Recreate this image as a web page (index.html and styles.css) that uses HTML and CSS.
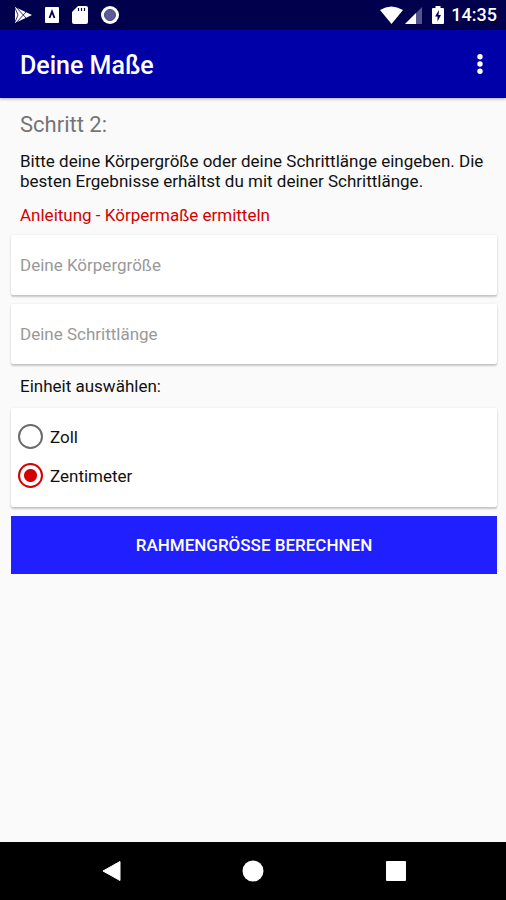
FILE: index.html
```html
<!DOCTYPE html>
<html lang="de">
<head>
<meta charset="utf-8">
<meta name="viewport" content="width=device-width, initial-scale=1">
<title>Deine Maße</title>
<link rel="stylesheet" href="styles.css">
</head>
<body>
<div class="status">
  <div class="status-group notices">
    <svg width="18" height="18" viewBox="0 0 18 18"><path d="M1 1 18 9 1 17Z" fill="#fff"/><path d="M2 1 12 12M2 17 12 6M1 2 4 9 1 16" stroke="#00004d" stroke-width=".8" fill="none"/></svg>
    <svg width="14" height="16" viewBox="0 0 14 16"><rect width="14" height="16" rx="1" fill="#fff"/><path d="M4.500 11 7 4.500 9.500 11" stroke="#00004d" stroke-width="1.800" fill="none"/></svg>
    <svg width="16" height="20" viewBox="0 0 16 20"><path d="M6 1h8q2 0 2 2v14q0 2-2 2H2q-2 0-2-2V7Z" fill="#fff"/><path d="M6.500 3v3M9.500 3v3M12.500 3v3" stroke="#00004d" stroke-width="1.200"/></svg>
    <svg width="18" height="18" viewBox="0 0 18 18"><circle cx="9" cy="9" r="9" fill="#fff"/><circle cx="9" cy="9" r="5.500" fill="#5c5c99" stroke="#44448a"/></svg>
  </div>
  <div class="status-group">
    <svg width="46" height="20" viewBox="0 0 46 20"><path d="M1 5Q12-2 24 5L12.500 19Z" fill="#fff"/><path d="M43 2v17H26Z" fill="#55558c"/><path d="M37 8v11H26Z" fill="#fff"/></svg>
    <svg class="battery" width="12" height="20" viewBox="0 0 12 20"><path d="M3.500 1h5v2H11q1 0 1 1v14q0 1-1 1H1q-1 0-1-1V4q0-1 1-1h2.500Z" fill="#fff"/><path d="M7 5 3 11.500h2.500V16.500L9 10H6.500Z" fill="#00004d"/></svg>
    <span class="clock">14:35</span>
  </div>
</div>
<header class="appbar">
  <h1>Deine Maße</h1>
  <button class="menu" type="button" aria-label="Weitere Optionen">
    <svg width="6" height="22" viewBox="0 0 6 22" fill="#fff"><circle cx="3" cy="3.700" r="2.700"/><circle cx="3" cy="11" r="2.700"/><circle cx="3" cy="18.300" r="2.700"/></svg>
  </button>
</header>
<main>
  <h2>Schritt 2:</h2>
  <p>Bitte deine Körpergröße oder deine Schrittlänge eingeben. Die besten Ergebnisse erhältst du mit deiner Schrittlänge.</p>
  <a class="guide" href="#anleitung">Anleitung - Körpermaße ermitteln</a>
  <form>
    <input class="card field" type="text" aria-label="Deine Körpergröße" placeholder="Deine Körpergröße">
    <input class="card field" type="text" aria-label="Deine Schrittlänge" placeholder="Deine Schrittlänge">
    <fieldset>
      <legend>Einheit auswählen:</legend>
      <div class="card options">
        <label><input type="radio" name="einheit">Zoll</label>
        <label><input type="radio" name="einheit" checked>Zentimeter</label>
      </div>
    </fieldset>
    <button class="submit" type="button">RAHMENGRÖSSE BERECHNEN</button>
  </form>
</main>
<nav>
  <button type="button" aria-label="Zurück"><svg width="20" height="22" viewBox="0 0 20 22"><path d="M19 1.500v19L2 11Z" fill="#fff" stroke="#fff" stroke-linejoin="round"/></svg></button>
  <button type="button" aria-label="Startseite"><svg width="22" height="22" viewBox="0 0 22 22"><circle cx="11" cy="11" r="10.500" fill="#fff"/></svg></button>
  <button type="button" aria-label="Übersicht"><svg width="20" height="20" viewBox="0 0 20 20"><rect width="20" height="20" rx="1" fill="#fff"/></svg></button>
</nav>
</body>
</html>
```
FILE: styles.css
```css
* {
  box-sizing: border-box;
}

body {
  margin: 0;
  min-height: 100vh;
  display: flex;
  flex-direction: column;
  background: #fafafa;
  color: #111;
  font: 17px/20px Roboto, sans-serif;
}

svg {
  display: block;
}

button {
  border: 0;
  padding: 0;
  background: none;
  font: inherit;
  cursor: pointer;
}

.status {
  height: 30px;
  padding: 0 9px 0 14px;
  display: flex;
  align-items: center;
  justify-content: space-between;
  background: #00004d;
  color: #fff;
}

.status-group {
  display: flex;
  align-items: center;
}

.notices {
  gap: 13px;
}

.battery {
  margin: 0 7px;
}

.clock {
  font-size: 18px;
  font-weight: 500;
}

.appbar {
  height: 68px;
  padding: 0 19px 0 20px;
  display: flex;
  align-items: center;
  justify-content: space-between;
  background: #0000a8;
  color: #fff;
  box-shadow: 0 1px 3px rgba(0, 0, 0, 0.3);
}

.appbar h1 {
  margin: 4px 0 0;
  font-size: 25px;
  line-height: 30px;
  font-weight: 500;
}

.menu {
  padding: 8px 4px;
}

main {
  flex: 1;
  padding: 13px 9px 13px 11px;
}

h2 {
  margin: 0 9px 12px;
  color: #757575;
  font-size: 22px;
  line-height: 28px;
  font-weight: 400;
}

p {
  margin: 0 0 14px 9px;
}

.guide {
  display: block;
  margin: 0 9px 10px;
  color: #d50000;
  text-decoration: none;
}

form {
  display: flex;
  flex-direction: column;
  gap: 9px;
}

.card {
  width: 100%;
  border: 0;
  border-radius: 2px;
  background: #fff;
  box-shadow: 0 2px 2px rgba(0, 0, 0, 0.2), 0 0 2px rgba(0, 0, 0, 0.1);
}

.field {
  height: 60px;
  padding: 0 9px;
  font: inherit;
  color: inherit;
}

.field::placeholder {
  color: #999;
  opacity: 1;
}

fieldset {
  min-width: 0;
  margin: 0;
  padding: 0;
  border: 0;
}

legend {
  padding: 3px 9px 12px;
}

.options {
  padding: 9px 7px 12px;
}

.options label {
  display: flex;
  align-items: center;
  gap: 7px;
  height: 39px;
}

.options input {
  appearance: none;
  width: 25px;
  height: 25px;
  margin: 0;
  border: 2px solid #6b6b6b;
  border-radius: 50%;
}

.options input:checked {
  border-color: #d50000;
  background: radial-gradient(circle, #d50000 6px, transparent 7px);
}

.submit {
  height: 58px;
  background: #1f1fff;
  color: #fff;
  font-size: 17px;
  font-weight: 500;
}

nav {
  height: 58px;
  padding: 0 39px 0 40px;
  display: grid;
  grid-template-columns: repeat(3, 1fr);
  background: #000;
}

nav button {
  display: flex;
  align-items: center;
  justify-content: center;
}
```
